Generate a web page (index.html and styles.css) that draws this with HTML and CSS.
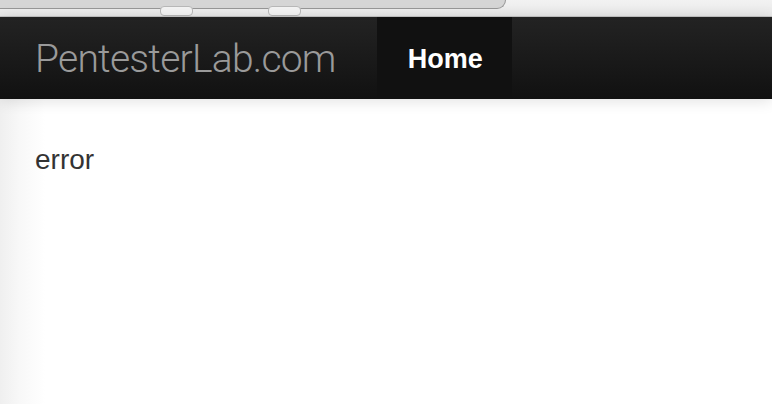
FILE: index.html
```html
<!DOCTYPE html>
<html>
<head>
<meta charset="utf-8">
<link rel="stylesheet" href="styles.css">
</head>
<body>
<div class="chrome">
  <div class="tabbar"></div>
  <span class="pill pill-a"></span>
  <span class="pill pill-b"></span>
</div>
<div class="navbar">
  <a class="brand">PentesterLab.com</a>
  <ul class="nav">
    <li class="active"><a>Home</a></li>
  </ul>
</div>
<div class="page">
  <div class="content">error</div>
</div>
</body>
</html>
```
FILE: styles.css
```css
html, body {
  margin: 0;
  padding: 0;
  height: 100%;
  background: #fff;
  font-family: "Liberation Sans", Arial, sans-serif;
  overflow: hidden;
}
.chrome {
  position: relative;
  height: 16px;
  background: linear-gradient(#f2f2f2, #e8e8e8);
  border-bottom: 1px solid #c4c4c4;
}
.tabbar {
  width: 505px;
  height: 8px;
  background: #d5d5d5;
  border-bottom: 1px solid #979797;
  border-right: 1px solid #979797;
  border-bottom-right-radius: 12px;
  box-sizing: content-box;
}
.pill {
  position: absolute;
  top: 6px;
  height: 10px;
  width: 33px;
  box-sizing: border-box;
  border: 1px solid #b8b8b8;
  border-radius: 4px;
  background: #f3f3f3;
}
.pill-a { left: 160px; }
.pill-b { left: 268px; }
.navbar {
  display: flex;
  align-items: stretch;
  height: 82px;
  background: linear-gradient(#232323, #111111);
  position: relative;
  z-index: 2;
  box-shadow: 0 2px 14px rgba(0,0,0,0.12);
}
.brand {
  display: flex;
  align-items: center;
  padding-left: 35px;
  padding-right: 41px;
  font-family: Roboto, "Liberation Sans", sans-serif;
  font-weight: 300;
  font-size: 39px;
  color: #9a9a9a;
  letter-spacing: -0.75px;
  padding-top: 2px;
}
.nav {
  display: flex;
  margin: 0;
  padding: 0;
  list-style: none;
}
.nav li {
  display: flex;
  align-items: center;
}
.nav li.active {
  background: #111;
  width: 135px;
  box-sizing: border-box;
  padding-left: 31px;
}
.nav li a {
  color: #fff;
  font-weight: bold;
  font-size: 27px;
  padding-top: 3px;
}
.page {
  height: 305px;
  box-sizing: border-box;
  background: linear-gradient(to right, #efefef 0px, #f8f8f8 20px, #fff 45px);
  padding: 45px 0 0 35px;
}
.content {
  color: #333;
  font-size: 28px;
  line-height: 32px;
}
```
